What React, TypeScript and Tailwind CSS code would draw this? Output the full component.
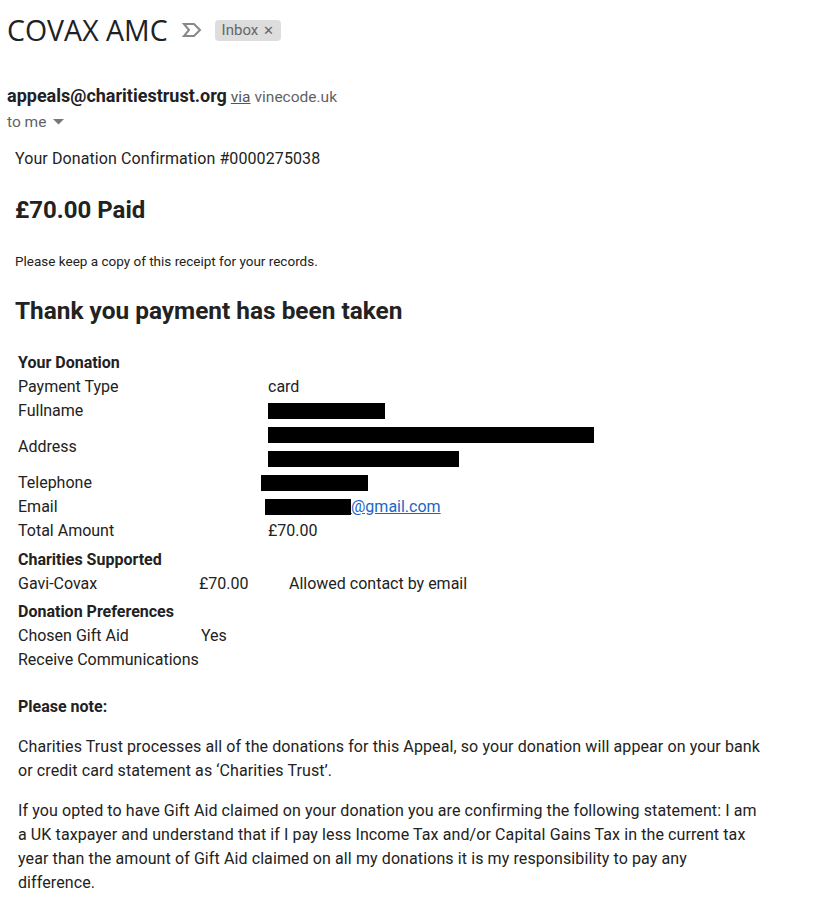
import React from "react";

const Bar = ({ w, ml = 0 }: { w: number; ml?: number }) => (
  <span className="inline-block bg-black align-middle h-[16px]" style={{ width: w, marginLeft: ml }} />
);

export default function App() {
  return (
    <div className="w-[815px] h-[923px] bg-white overflow-hidden text-[#222222] font-['Roboto',sans-serif]">
      {/* Subject */}
      <div className="flex items-center pl-[7px] pt-[12px] h-[36px] box-content">
        <h1 className="font-['Open_Sans',sans-serif] text-[28.5px] leading-[36px] font-normal text-[#202124]">COVAX AMC</h1>
        <svg className="ml-[14px]" width="20" height="16" viewBox="0 0 20 16">
          <path d="M2 2 H12 L18 8 L12 14 H2 L7 8 Z" fill="none" stroke="#888" strokeWidth="2" strokeLinejoin="miter" />
        </svg>
        <span className="ml-[13px] flex items-center h-[21px] px-[7px] rounded-[4px] bg-[#dddddd] text-[#666666] text-[15px] leading-none">
          Inbox<span className="ml-[5px] text-[13px]">✕</span>
        </span>
      </div>

      {/* Sender */}
      <div className="pl-[7px] mt-[37px]">
        <div className="flex items-baseline leading-[22px]">
          <span className="font-bold text-[18px] text-[#202124]">appeals@charitiestrust.org</span>
          <span className="ml-[4px] text-[15.5px] text-[#555555] underline">via</span>
          <span className="ml-[4px] text-[15.5px] text-[#5f6368]">vinecode.uk</span>
        </div>
        <div className="flex items-center text-[15.5px] text-[#5f6368] leading-[20px] mt-[4px]">
          to me
          <svg className="ml-[7px]" width="11" height="6" viewBox="0 0 11 6"><path d="M0 0 H11 L5.5 5.5 Z" fill="#777" /></svg>
        </div>
      </div>

      {/* Body */}
      <div className="pl-[15px] mt-[15px]">
        <p className="text-[16px] leading-[24px] tracking-[0.1px]">Your Donation Confirmation #0000275038</p>
        <p className="mt-[25px] text-[24px] font-bold leading-[28px]">£70.00 Paid</p>
        <p className="mt-[28px] text-[13.5px] leading-[18px]">Please keep a copy of this receipt for your records.</p>
        <p className="mt-[25px] text-[24.4px] font-bold leading-[32px]">Thank you payment has been taken</p>
      </div>

      <div className="pl-[18px] mt-[24px] text-[16px] leading-[24px]">
        <div className="font-bold">Your Donation</div>
        <div className="flex"><span className="w-[250px]">Payment Type</span><span>card</span></div>
        <div className="flex items-center"><span className="w-[250px]">Fullname</span><Bar w={117} /></div>
        <div className="flex items-center h-[48px]">
          <span className="w-[250px]">Address</span>
          <div className="flex flex-col gap-[8px]">
            <Bar w={326} />
            <Bar w={191} />
          </div>
        </div>
        <div className="flex items-center"><span className="w-[243px]">Telephone</span><Bar w={107} /></div>
        <div className="flex items-center">
          <span className="w-[247px]">Email</span>
          <Bar w={86} />
          <a className="text-[#1a66c6] underline">@gmail.com</a>
        </div>
        <div className="flex"><span className="w-[250px]">Total Amount</span><span>£70.00</span></div>

        <div className="font-bold mt-[5px]">Charities Supported</div>
        <div className="flex"><span className="w-[181px]">Gavi-Covax</span><span className="w-[90px]">£70.00</span><span>Allowed contact by email</span></div>
        <div className="font-bold mt-[4px]">Donation Preferences</div>
        <div className="flex"><span className="w-[183px]">Chosen Gift Aid</span><span>Yes</span></div>
        <div>Receive Communications</div>

        <p className="font-bold mt-[23px]">Please note:</p>
        <p className="mt-[16px] w-[750px] tracking-[0.1px]">Charities Trust processes all of the donations for this Appeal, so your donation will appear on your bank or credit card statement as ‘Charities Trust’.</p>
        <p className="mt-[16px] w-[750px] tracking-[0.1px]">If you opted to have Gift Aid claimed on your donation you are confirming the following statement: I am a UK taxpayer and understand that if I pay less Income Tax and/or Capital Gains Tax in the current tax year than the amount of Gift Aid claimed on all my donations it is my responsibility to pay any difference.</p>
      </div>
    </div>
  );
}
